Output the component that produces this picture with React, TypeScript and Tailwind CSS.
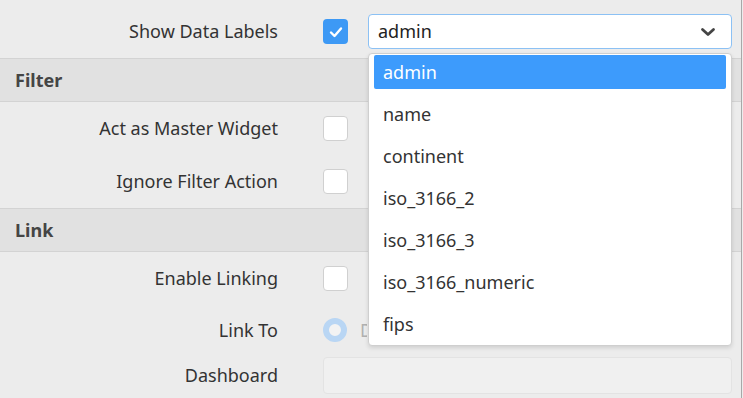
const options = [
  "admin",
  "name",
  "continent",
  "iso_3166_2",
  "iso_3166_3",
  "iso_3166_numeric",
  "fips",
]

function Checkbox({ checked = false }: { checked?: boolean }) {
  if (checked) {
    return (
      <div className="flex h-[25px] w-[25px] items-center justify-center rounded-[4px] bg-[#3d99f5]">
        <svg width="16" height="16" viewBox="0 0 16 16" fill="none">
          <polyline
            points="3,8.5 6.5,12 13,4.5"
            stroke="#fff"
            strokeWidth="2.4"
            strokeLinecap="round"
            strokeLinejoin="round"
          />
        </svg>
      </div>
    )
  }
  return <div className="h-[25px] w-[25px] rounded-[4px] border border-[#d0d0d0] bg-white" />
}

function Row({
  label,
  height = "h-[53px]",
  children,
}: {
  label: string
  height?: string
  children?: React.ReactNode
}) {
  return (
    <div className={`flex items-center ${height}`}>
      <div className="w-[278px] text-right text-[18px] text-[#333]">{label}</div>
      <div className="ml-[45px] flex flex-1 items-center">{children}</div>
    </div>
  )
}

function SectionHeader({ title }: { title: string }) {
  return (
    <div className="flex h-[44px] items-center border-y border-[#d3d3d3] bg-[#e1e1e1] pl-[15px] text-[18px] font-bold text-[#454545]">
      {title}
    </div>
  )
}

export default function App() {
  return (
    <div
      className="relative h-[398px] w-[743px] overflow-hidden bg-[#ececec]"
      style={{ fontFamily: '"Noto Sans", "Open Sans", sans-serif' }}
    >
      <div className="relative h-full w-[742px] border-r border-[#a8a8a8] pt-[5px]">
        <div className="flex h-[53px] items-center">
          <div className="w-[278px] text-right text-[18px] text-[#333]">Show Data Labels</div>
          <div className="ml-[45px]">
            <Checkbox checked />
          </div>
          <div className="ml-[20px] flex h-[35px] w-[364px] items-center justify-between rounded-[4px] border border-[#8cc1f4] bg-white pl-[9px] pr-[15px] text-[18px] text-[#222]">
            <span>admin</span>
            <svg width="16" height="10" viewBox="0 0 16 10" fill="none">
              <polyline
                points="2.5,2.5 8,7.5 13.5,2.5"
                stroke="#444"
                strokeWidth="2.8"
                strokeLinecap="round"
                strokeLinejoin="round"
              />
            </svg>
          </div>
        </div>

        <SectionHeader title="Filter" />
        <Row label="Act as Master Widget">
          <Checkbox />
        </Row>
        <Row label="Ignore Filter Action">
          <Checkbox />
        </Row>

        <SectionHeader title="Link" />
        <Row label="Enable Linking">
          <Checkbox />
        </Row>
        <Row label="Link To" height="h-[50px]">
          <div className="h-[24px] w-[24px] rounded-full border-[6px] border-[#b9d6f4] bg-[#f3f3f3]" />
          <div className="ml-[13px] w-[7px] overflow-hidden whitespace-nowrap text-[18px] text-[#b0b0b0]">
            Dashboard
          </div>
        </Row>
        <Row label="Dashboard" height="h-[40px]">
          <div className="h-[37px] w-[409px] rounded-[4px] border border-[#e3e3e3] bg-[#f0f0f0]" />
        </Row>

        <div className="absolute left-[368px] top-[53px] w-[364px] rounded-[4px] border border-[#cfcfcf] bg-white pb-[4px] pt-[1px] shadow-[0_2px_4px_rgba(0,0,0,0.12)]">
          {options.map((opt, i) => (
            <div
              key={opt}
              className={`mx-[5px] mb-[8px] flex h-[34px] items-center rounded-[2px] px-[9px] text-[18px] last:mb-0 ${
                i === 0 ? "bg-[#3d9bfc] text-white" : "text-[#333]"
              }`}
            >
              {opt}
            </div>
          ))}
        </div>
      </div>
    </div>
  )
}
